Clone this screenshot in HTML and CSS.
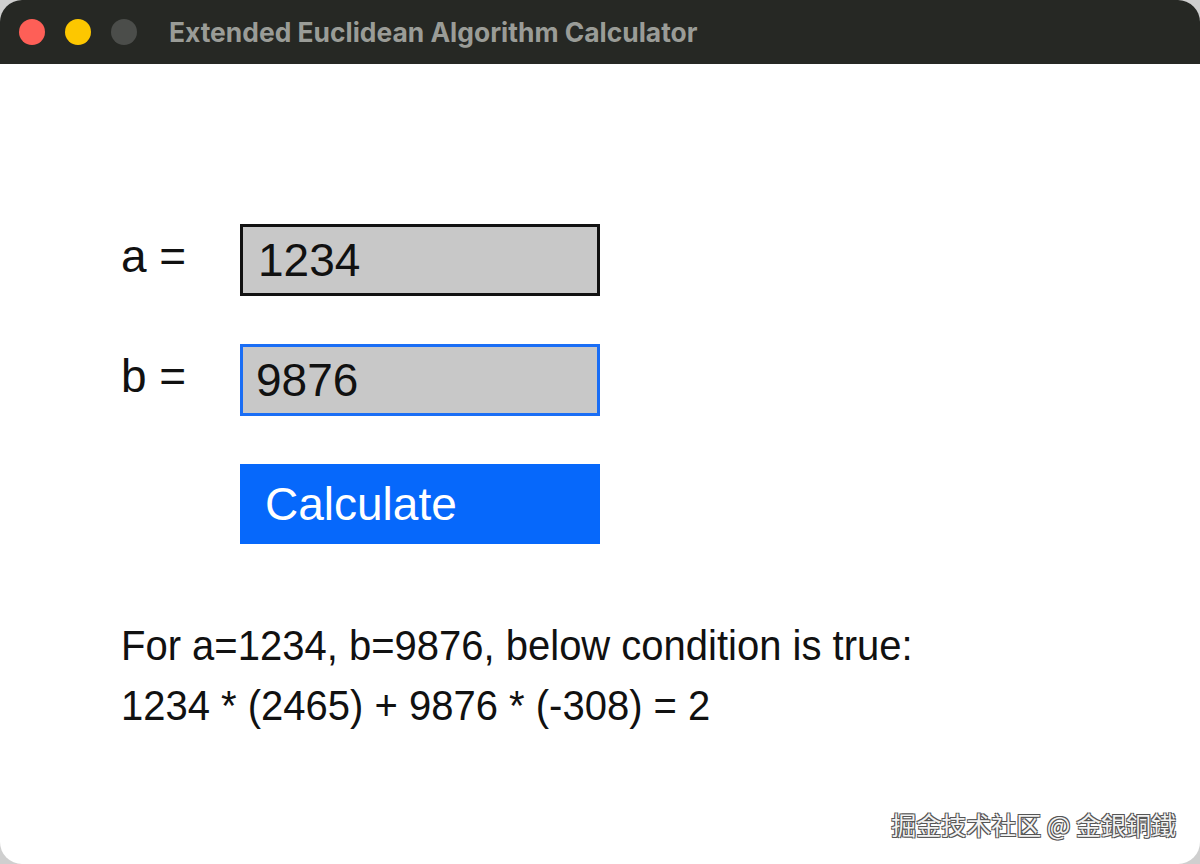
FILE: index.html
```html
<!DOCTYPE html>
<html lang="en">
<head>
  <meta charset="UTF-8">
  <title>Extended Euclidean Algorithm Calculator</title>
  <link rel="stylesheet" href="styles.css">
</head>
<body>
  <div class="window">
    <div class="titlebar">
      <span class="light red"></span>
      <span class="light yellow"></span>
      <span class="light grey"></span>
      <span class="title">Extended Euclidean Algorithm Calculator</span>
    </div>

    <div class="content">
      <div class="form-row">
        <label class="label" for="inputA">a =</label>
        <input type="text" id="inputA" class="field" value="1234" />
      </div>
      <div class="form-row">
        <label class="label" for="inputB">b =</label>
        <input type="text" id="inputB" class="field focused" value="9876" />
      </div>
      <div class="form-row">
        <span class="label"></span>
        <button class="calc-btn">Calculate</button>
      </div>

      <div class="result">
        <p>For a=1234, b=9876, below condition is true:</p>
        <p>1234 * (2465) + 9876 * (-308) = 2</p>
      </div>
    </div>

    <div class="watermark">掘金技术社区 @ 金銀銅鐵</div>
  </div>
</body>
</html>
```

FILE: styles.css
```css
body {
  margin: 0;
  background-color: #cfcfcf;
  font-family: 'Liberation Sans', Arial, sans-serif;
}

.window {
  width: 1200px;
  height: 864px;
  background: white;
  border-radius: 22px;
  overflow: hidden;
  display: flex;
  flex-direction: column;
}

.titlebar {
  height: 64px;
  background-color: #262824;
  display: flex;
  align-items: center;
  padding-left: 19px;
  flex-shrink: 0;
}

.light {
  width: 26px;
  height: 26px;
  border-radius: 50%;
  margin-right: 20px;
}

.red {
  background-color: #fe5f57;
}

.yellow {
  background-color: #fdc700;
}

.grey {
  background-color: #4b4d4a;
}

.title {
  margin-left: 12px;
  font-family: 'Inter', 'Open Sans', sans-serif;
  font-weight: 700;
  font-size: 26.4px;
  color: #9a9c97;
}

.content {
  flex: 1;
  padding: 160px 0 0 121px;
}

.form-row {
  display: flex;
  align-items: center;
  margin-bottom: 48px;
  height: 72px;
}

.form-row:nth-child(3) {
  height: 80px;
}

.label {
  width: 119px;
  font-size: 46px;
  color: #111;
  margin-top: -8px;
}

.field {
  box-sizing: border-box;
  width: 360px;
  height: 72px;
  background-color: #c8c8c8;
  border: 3px solid #111;
  padding: 0 0 0 15px;
  font-family: 'Liberation Sans', Arial, sans-serif;
  font-size: 46px;
  color: #111;
  outline: none;
}

.field.focused {
  border: 3px solid #1a6ef5;
  padding-left: 13px;
}

.calc-btn {
  width: 360px;
  height: 80px;
  background-color: #0668fb;
  color: white;
  border: none;
  font-family: 'Liberation Sans', Arial, sans-serif;
  font-size: 46px;
  text-align: left;
  padding: 0 0 0 25px;
  cursor: pointer;
}

.result {
  margin-top: 71px;
  font-size: 40px;
  color: #111;
}

.result p {
  margin: 0;
  line-height: 60px;
  transform: scaleY(1.05);
}

.watermark {
  align-self: flex-end;
  margin: 0 24px 22px 0;
  font-family: 'Noto Sans CJK SC', sans-serif;
  font-size: 25px;
  color: #f2f2f2;
  text-shadow: -1px -1px 0 #555, 1px -1px 0 #555, -1px 1px 0 #555, 1px 1px 0 #555;
}
```
